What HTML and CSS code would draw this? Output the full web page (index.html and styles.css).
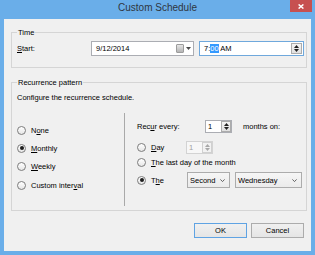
FILE: index.html
```html
<!DOCTYPE html>
<html lang="en">
<head>
    <meta charset="UTF-8">
    <title>Custom Schedule</title>
    <link rel="stylesheet" href="styles.css">
</head>
<body>

<div class="window">
    <div class="titlebar">
        <span></span>
        <div class="title">Custom Schedule</div>
        <div class="close">
            <svg width="6" height="5" viewBox="0 0 6 5"><path d="M0.6 0.4 L5.4 4.6 M5.4 0.4 L0.6 4.6" stroke="#fff" stroke-width="1.4"/></svg>
        </div>
    </div>

    <div class="client">
        <fieldset class="group group-time">
            <legend>Time</legend>
            <div class="start-row">
                <span class="start-label"><u>S</u>tart:</span>
                <div class="field date-field">
                    <span class="field-text">9/12/2014</span>
                    <span class="cal-icon"></span>
                    <svg class="drop-arrow" width="5" height="3" viewBox="0 0 5 3"><path d="M0 0 H5 L2.5 3 Z" fill="#4a4a4a"/></svg>
                </div>
                <div class="field time-field">
                    <span class="field-text">7:<span class="sel">00</span> AM</span>
                    <div class="spin">
                        <span class="spin-btn"><svg width="5" height="3" viewBox="0 0 5 3"><path d="M0 3 H5 L2.5 0 Z"/></svg></span>
                        <span class="spin-btn"><svg width="5" height="3" viewBox="0 0 5 3"><path d="M0 0 H5 L2.5 3 Z"/></svg></span>
                    </div>
                </div>
            </div>
        </fieldset>

        <fieldset class="group group-recur">
            <legend>Recurrence pattern</legend>
            <p class="hint">Configure the recurrence schedule.</p>
            <div class="pattern">
                <div class="kinds">
                    <label class="radio"><span class="dot"></span><span>N<u>o</u>ne</span></label>
                    <label class="radio"><span class="dot checked"></span><span><u>M</u>onthly</span></label>
                    <label class="radio"><span class="dot"></span><span><u>W</u>eekly</span></label>
                    <label class="radio"><span class="dot"></span><span>Custom inter<u>v</u>al</span></label>
                </div>
                <div class="monthly">
                    <div class="row recur-row">
                        <span class="recur-label">Rec<u>u</u>r every:</span>
                        <div class="updown">
                            <span class="updown-text">1</span>
                            <div class="spin">
                                <span class="spin-btn"><svg width="5" height="3" viewBox="0 0 5 3"><path d="M0 3 H5 L2.5 0 Z"/></svg></span>
                                <span class="spin-btn"><svg width="5" height="3" viewBox="0 0 5 3"><path d="M0 0 H5 L2.5 3 Z"/></svg></span>
                            </div>
                        </div>
                        <span class="months-on">months on:</span>
                    </div>
                    <div class="row day-row">
                        <label class="radio day-radio"><span class="dot"></span><span><u>D</u>ay</span></label>
                        <div class="updown disabled">
                            <span class="updown-text">1</span>
                            <div class="spin">
                                <span class="spin-btn"><svg width="5" height="3" viewBox="0 0 5 3"><path d="M0 3 H5 L2.5 0 Z"/></svg></span>
                                <span class="spin-btn"><svg width="5" height="3" viewBox="0 0 5 3"><path d="M0 0 H5 L2.5 3 Z"/></svg></span>
                            </div>
                        </div>
                    </div>
                    <div class="row last-row">
                        <label class="radio"><span class="dot"></span><span><u>T</u>he last day of the month</span></label>
                    </div>
                    <div class="row the-row">
                        <label class="radio the-radio"><span class="dot checked"></span><span>T<u>h</u>e</span></label>
                        <div class="combo combo-week">
                            <span class="combo-text">Second</span>
                            <svg width="5" height="3" viewBox="0 0 5 3"><path d="M0.4 0.4 L2.5 2.6 L4.6 0.4" fill="none" stroke="#555" stroke-width="0.9"/></svg>
                        </div>
                        <div class="combo combo-day">
                            <span class="combo-text">Wednesday</span>
                            <svg width="5" height="3" viewBox="0 0 5 3"><path d="M0.4 0.4 L2.5 2.6 L4.6 0.4" fill="none" stroke="#555" stroke-width="0.9"/></svg>
                        </div>
                    </div>
                </div>
            </div>
        </fieldset>

        <div class="actions">
            <button class="btn btn-default">OK</button>
            <button class="btn">Cancel</button>
        </div>
    </div>
</div>

</body>
</html>
```

FILE: styles.css
```css
/* Dialog frame */
* {
    box-sizing: border-box;
}

body {
    margin: 0;
    font-family: "Liberation Sans", Arial, sans-serif;
    font-size: 7.5px;
    line-height: 9px;
    color: #000;
}

.window {
    width: 315px;
    height: 255px;
    background: #6aaee9;
    display: flex;
    flex-direction: column;
    padding: 0 4px 4px;
}

.titlebar {
    height: 19px;
    display: grid;
    grid-template-columns: 1fr auto 1fr;
    align-items: center;
}

.title {
    font-size: 10px;
    line-height: 12px;
    color: #2f3640;
    margin-top: -3px;
}

.close {
    justify-self: end;
    align-self: start;
    width: 22px;
    height: 12px;
    margin-right: -1px;
    background: #c75050;
    display: flex;
    align-items: center;
    justify-content: center;
}

.client {
    flex: 1;
    background: #f0f0f0;
    padding: 9px 4px 0 7px;
}

/* Group boxes */
.group {
    margin: 0;
    min-width: 0;
    border: 1px solid #d5d5d5;
    padding: 4px 2px 11px 5px;
}

.group legend {
    padding: 0 1px;
    line-height: 9px;
}

.group-recur {
    margin-top: 10px;
    padding: 6px 2px 4px 5px;
}

.start-row {
    display: flex;
    align-items: center;
    height: 15px;
}

.start-label {
    flex: 1;
}

/* Inputs */
.field {
    display: flex;
    align-items: center;
    height: 15px;
    background: #fff;
    border: 1px solid #abadb3;
    padding-left: 4px;
}

.field-text {
    flex: 1;
}

.date-field {
    width: 103px;
    padding-right: 2px;
}

.cal-icon {
    width: 8px;
    height: 9px;
    border: 1px solid #9c9c9c;
    border-radius: 1px;
    background: linear-gradient(#e6e6e6, #b4b4b4);
}

.drop-arrow {
    margin-left: 2px;
}

.time-field {
    width: 105px;
    margin-left: 5px;
    border-color: #6fa8dc;
    padding-right: 1px;
}

.sel {
    background: #3399ff;
    color: #fff;
}

.spin {
    display: flex;
    flex-direction: column;
    width: 11px;
    height: 11px;
    border: 1px solid #acacac;
    background: linear-gradient(#f4f4f4, #e0e0e0);
}

.spin-btn {
    flex: 1;
    display: flex;
    align-items: center;
    justify-content: center;
}

.spin-btn svg {
    fill: #222;
}

.hint {
    margin: 0;
}

/* Recurrence pattern */
.pattern {
    display: flex;
    margin-top: 11px;
    height: 93px;
}

.kinds {
    width: 107px;
    padding-top: 8px;
}

.kinds .radio {
    height: 18.3px;
}

.radio {
    display: flex;
    align-items: center;
    gap: 5px;
}

.dot {
    width: 9px;
    height: 9px;
    border-radius: 50%;
    border: 1px solid #7c7c7c;
    background: linear-gradient(#ffffff, #e6e6e6);
    display: flex;
    align-items: center;
    justify-content: center;
    flex-shrink: 0;
}

.dot.checked::after {
    content: "";
    width: 4px;
    height: 4px;
    border-radius: 50%;
    background: #1c1c1c;
}

.monthly {
    flex: 1;
    border-left: 1px solid #a9a9a9;
    padding: 7px 0 0 12px;
}

.row {
    display: flex;
    align-items: center;
    height: 13px;
}

.recur-label {
    width: 68px;
}

.updown {
    display: flex;
    align-items: center;
    width: 27px;
    height: 13px;
    border: 1px solid #abadb3;
    background: #fff;
}

.updown-text {
    flex: 1;
    padding-left: 2px;
}

.updown .spin {
    width: 10px;
    height: 11px;
}

.updown.disabled {
    border-color: #d3d3d3;
    background: #f7f7f7;
    color: #a0a0a0;
}

.updown.disabled .spin {
    border-color: #d0d0d0;
    background: #f2f2f2;
}

.updown.disabled .spin-btn svg {
    fill: #a8a8a8;
}

.months-on {
    margin-left: 11px;
}

.day-row {
    margin-top: 8px;
}

.day-radio {
    width: 49px;
}

.last-row {
    margin-top: 2px;
}

.the-row {
    margin-top: 3px;
    height: 16px;
}

.the-radio {
    width: 50px;
}

.combo {
    display: flex;
    align-items: center;
    height: 16px;
    border: 1px solid #acacac;
    background: linear-gradient(#f6f6f6, #ebebeb);
    padding: 0 4px 0 2px;
}

.combo-text {
    flex: 1;
}

.combo-week {
    width: 43px;
}

.combo-day {
    width: 67px;
    margin-left: 5px;
}

/* Buttons */
.actions {
    display: flex;
    justify-content: flex-end;
    gap: 4px;
    margin-top: 12px;
    padding-right: 3px;
}

.btn {
    width: 53px;
    height: 15px;
    padding: 0;
    font: inherit;
    color: #000;
    border: 1px solid #acacac;
    border-radius: 0;
    background: linear-gradient(#f0f0f0, #e5e5e5);
}

.btn-default {
    border-color: #5fa3e3;
}
```
